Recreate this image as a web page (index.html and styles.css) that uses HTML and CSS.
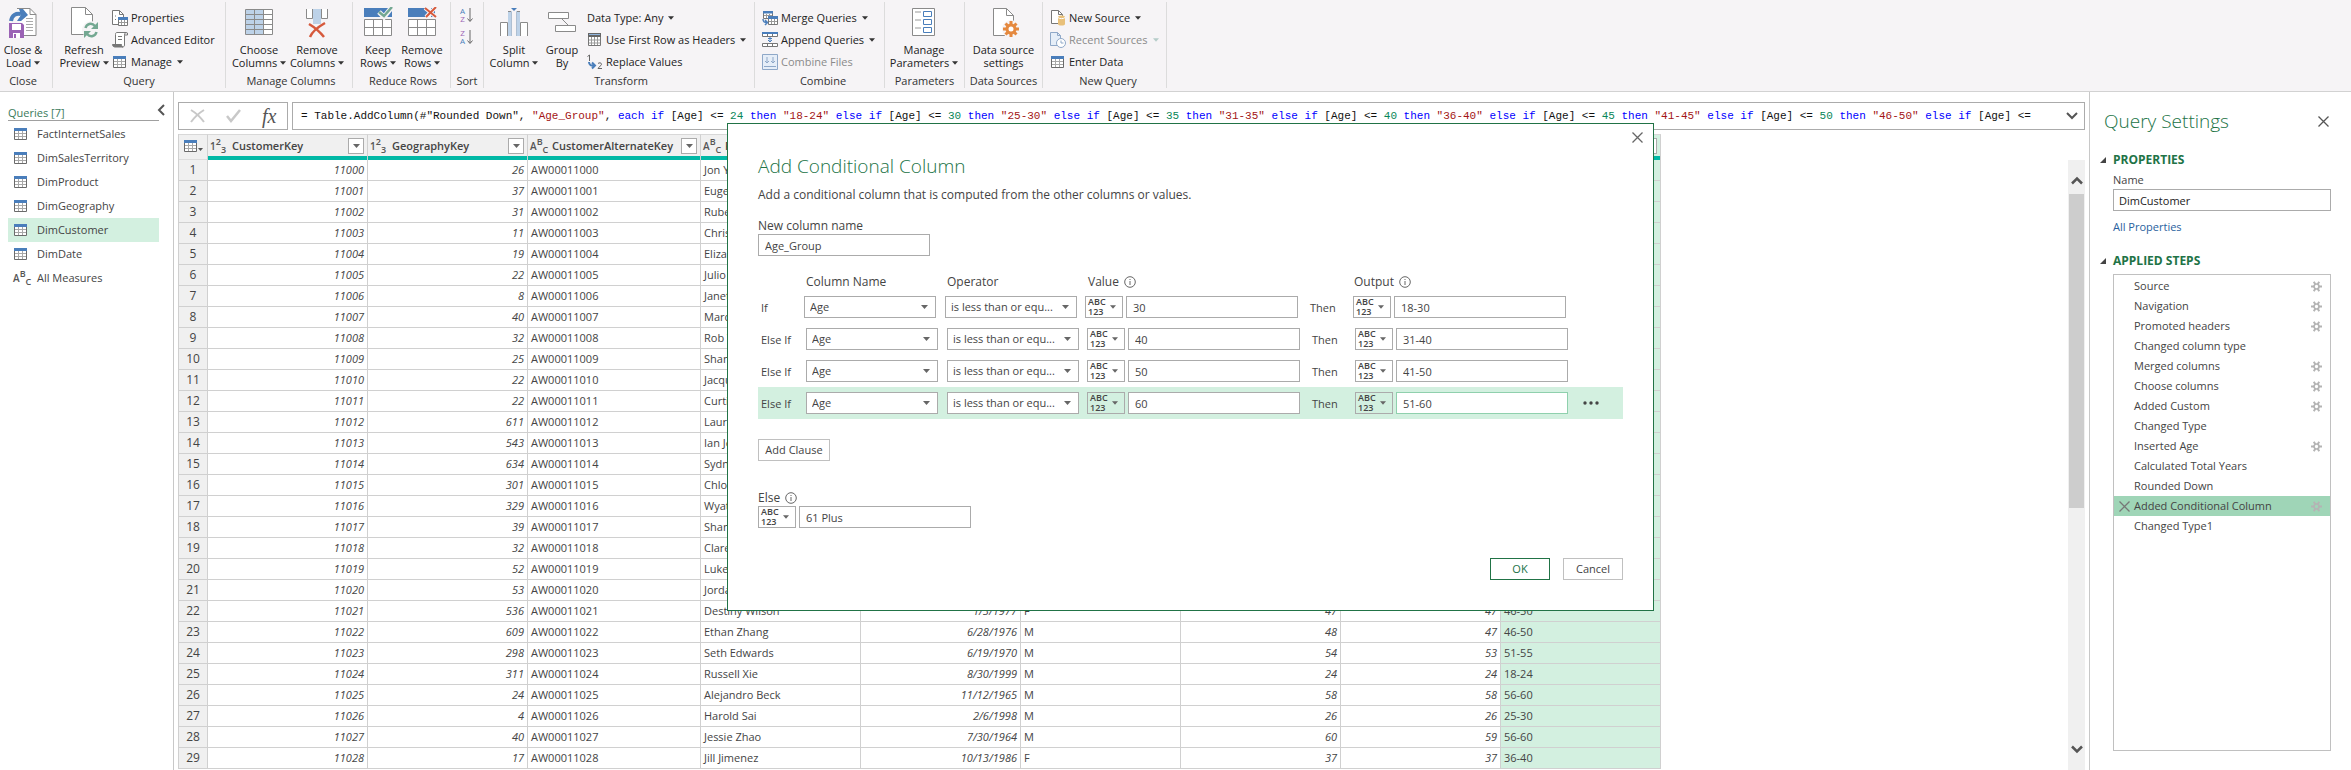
FILE: index.html
```html
<!DOCTYPE html>
<html lang="en">
<head>
<meta charset="utf-8">
<title>Power Query Editor</title>
<link rel="stylesheet" href="styles.css">
</head>
<body>
<svg class="defs" aria-hidden="true">
  <symbol id="caret" viewBox="0 0 7 4"><path d="M0 0h7L3.500 4z" fill="currentColor"/></symbol>
  <symbol id="grid" viewBox="0 0 13 12"><path d="M.5 1.500h12v10h-12z" fill="#fff" stroke="#6a6a6a"/><path d="M0 0h13v3H0z" fill="#4a7ebb"/><path d="M1 5.500h11M1 8.500h11M4.500 3v8M8.500 3v8" stroke="#a8a8a8" fill="none"/></symbol>
  <symbol id="cross" viewBox="0 0 11 11"><path d="M.5 .5l10 10M10.500 .5l-10 10" stroke="currentColor" stroke-width="1.300" fill="none"/></symbol>
  <symbol id="gear" viewBox="0 0 11 11"><path d="M0 5.500h3M8 5.500h3M2.800 .8l1.500 2.500M8.200 .8L6.700 3.300M2.800 10.200l1.500-2.500M8.200 10.200L6.700 7.700" stroke="#b4b4b4" stroke-width="2" fill="none"/><circle cx="5.500" cy="5.500" r="2.500" fill="none" stroke="#b4b4b4" stroke-width="1.700"/></symbol>
  <symbol id="info" viewBox="0 0 12 12"><circle cx="6" cy="6" r="5.300" fill="none" stroke="#666"/><path d="M6 5v4M6 3v1" stroke="#666" fill="none"/></symbol>
  <symbol id="tri" viewBox="0 0 6 6"><path d="M6 0v6H0z" fill="#444"/></symbol>
</svg>

<header class="ribbon">
  <section class="group g-close">
    <div class="tools">
      <button class="big"><svg class="pic" viewBox="0 0 30 32"><path d="M9 1.500h13l6 6v21H16" fill="#fff" stroke="#8a8a8a"/><path d="M22 1.500v6h6" fill="none" stroke="#8a8a8a"/><path d="M18 11.500h7M18 14.500h7M18 17.500h7M18 20.500h7M18 23.500h7" stroke="#aaa"/><path d="M3 14C4 8 8 6 13 7" fill="none" stroke="#4a7ebb" stroke-width="4"/><path d="M11 2h4l5 6-7 6h-4l4-6z" fill="#4a7ebb"/><path d="M1 16h13l2 2v13H1z" fill="#9b63b5"/><path d="M4 17h9v6H4z" fill="#fff"/><path d="M5 26h7v5H5z" fill="#fff"/><path d="M6 27h2v4H6z" fill="#9b63b5"/></svg><span>Close &amp;<br>Load <svg class="caret"><use href="#caret"/></svg></span></button>
    </div>
    <h2>Close</h2>
  </section>
  <section class="group g-query">
    <div class="tools">
      <button class="big"><svg class="pic" viewBox="0 0 30 32"><path d="M2.500 .5h14l7 7v20h-21z" fill="#fff" stroke="#8a8a8a"/><path d="M16.500 .5v7h7" fill="none" stroke="#8a8a8a"/><circle cx="22" cy="23" r="9" fill="#f6f4f6"/><path d="M16.500 21c1-4 6-6 9.500-2M27.500 25c-1 4-6 6-9.500 2" fill="none" stroke="#74a892" stroke-width="2.500"/><path d="M29 15v7h-7zM15 31v-7h7z" fill="#74a892"/></svg><span>Refresh<br>Preview <svg class="caret"><use href="#caret"/></svg></span></button>
      <div class="stack">
        <button class="small"><svg class="ico" viewBox="0 0 16 16"><path d="M.5 .5h7l4 4v10H.5z" fill="#fff" stroke="#777"/><path d="M7.500 .5v4h4M3 6h1M3 9.500h1" stroke="#777" fill="none"/><path d="M6.500 8.500h9v7h-9z" fill="#fff" stroke="#777"/><path d="M6 7h10v3H6z" fill="#4a7ebb"/><path d="M7 12.500h8M9.500 10v5M12.500 10v5" stroke="#999"/></svg>Properties</button>
        <button class="small"><svg class="ico" viewBox="0 0 16 16"><path d="M3.500 12V2.500C3.500 1 4 .5 5 .5h9c-1 .5-1.500 1-1.500 3V13c0 1.500-1 2-2 2" fill="#fff" stroke="#777"/><path d="M.5 12.500h9c0 1.500.5 2.500 1.500 2.500H3C1.500 15 .5 14 .5 12.500z" fill="#777" stroke="#777"/><path d="M12 3h3.500V1L14 .5M6 4.500h4M6 7.500h4" stroke="#777" fill="none"/></svg>Advanced Editor</button>
        <button class="small"><svg class="ico" viewBox="0 0 16 14"><use href="#grid" x="1" y="1" width="13" height="12"/></svg>Manage <svg class="caret"><use href="#caret"/></svg></button>
      </div>
    </div>
    <h2>Query</h2>
  </section>
  <section class="group g-cols">
    <div class="tools">
      <button class="big"><svg class="pic" viewBox="0 0 30 32"><path d="M1.500 2.500h27v25h-27z" fill="#fff"/><path d="M1.500 2.500h18v25h-18z" fill="#bdd2e8"/><path d="M1.500 2.500h27v25h-27zM10.500 2v26M19.500 2v26M1 7.500h28M1 12.500h28M1 17.500h28M1 22.500h28" fill="none" stroke="#8a8a8a"/></svg><span>Choose<br>Columns <svg class="caret"><use href="#caret"/></svg></span></button>
      <button class="big"><svg class="pic" viewBox="0 0 30 32"><path d="M4.500 2v9.500h6V2M25.500 2v9.500h-6V2" fill="#fff" stroke="#8a8a8a"/><path d="M11 2h8v15h-8z" fill="#bdd2e8"/><path d="M7 17c5 3 11 8 15 13M23 16C16 20 10 25 8 30" fill="none" stroke="#d6593c" stroke-width="2.500"/></svg><span>Remove<br>Columns <svg class="caret"><use href="#caret"/></svg></span></button>
    </div>
    <h2>Manage Columns</h2>
  </section>
  <section class="group g-rows">
    <div class="tools">
      <button class="big"><svg class="pic" viewBox="0 0 30 32"><path d="M1 1h28v9H1z" fill="#4a7ebb"/><path d="M1.500 12.500h27v16h-27zM10.500 12v16M19.500 12v16M1 20.500h28" fill="#fff" stroke="#8a8a8a"/><path d="M16 5l5 5 8-10" fill="none" stroke="#f6f4f6" stroke-width="5"/><path d="M16 5l5 4 8-9" fill="none" stroke="#74a892" stroke-width="2.500"/></svg><span>Keep<br>Rows <svg class="caret"><use href="#caret"/></svg></span></button>
      <button class="big"><svg class="pic" viewBox="0 0 30 32"><path d="M1 1h17l3 4-3 5H1z" fill="#4a7ebb"/><path d="M24 1h4v9h-4z" fill="#4a7ebb"/><path d="M1.500 12.500h27v16h-27zM10.500 12v16M19.500 12v16M1 20.500h28" fill="#fff" stroke="#8a8a8a"/><path d="M18 1l11 9M29 0L19 10" fill="none" stroke="#f6f4f6" stroke-width="4"/><path d="M18 1l11 9M29 0L19 10" fill="none" stroke="#d6593c" stroke-width="2"/></svg><span>Remove<br>Rows <svg class="caret"><use href="#caret"/></svg></span></button>
    </div>
    <h2>Reduce Rows</h2>
  </section>
  <section class="group g-sort">
    <div class="tools sorts">
      <button class="sort" aria-label="Sort ascending"><span><b class="a">A</b><b class="z">Z</b></span><svg viewBox="0 0 6 16"><path d="M3 1v13M.5 11.500l2.500 3 2.500-3" fill="none" stroke="#666"/></svg></button>
      <button class="sort" aria-label="Sort descending"><span><b class="z">Z</b><b class="a">A</b></span><svg viewBox="0 0 6 16"><path d="M3 1v13M.5 11.500l2.500 3 2.500-3" fill="none" stroke="#666"/></svg></button>
    </div>
    <h2>Sort</h2>
  </section>
  <section class="group g-trans">
    <div class="tools">
      <button class="big"><svg class="pic" viewBox="0 0 30 32"><path d="M1.500 29V15.500h7V29M28.500 29V15.500h-7V29" fill="#fff" stroke="#8a8a8a"/><path d="M9 4h4v25H9zM17 4h4v25h-4z" fill="#bdd2e8"/><path d="M9 4.500h3M18 4.500h3" stroke="#8a8a8a"/><path d="M12.500 5v24M17.500 5v24" stroke="#aebfd2"/><path d="M12 1h6l-3 3z" fill="#4a7ebb"/></svg><span>Split<br>Column <svg class="caret"><use href="#caret"/></svg></span></button>
      <button class="big"><svg class="pic" viewBox="0 0 30 32"><path d="M1.500 5.500h20v6h-20zM8.500 18.500h20v6h-20zM15 12l6 6" fill="#fff" stroke="#8a8a8a"/></svg><span>Group<br>By</span></button>
      <div class="stack">
        <button class="small">Data Type: Any <svg class="caret"><use href="#caret"/></svg></button>
        <button class="small"><svg class="ico" viewBox="0 0 16 14"><path d="M1.500 .5h12v12h-12z" fill="#fff" stroke="#777"/><path d="M1 0h13v4H1z" fill="#666"/><path d="M2 1.500h11" stroke="#8fb4dd"/><path d="M2 7h11M2 10h11M4.500 4v8M7.500 4v8M10.500 4v8" stroke="#999"/></svg>Use First Row as Headers <svg class="caret"><use href="#caret"/></svg></button>
        <button class="small"><svg class="ico" viewBox="0 0 16 16"><path d="M.5 2.500L2.500 1v6M11 9.500c1-1 3.500-1 3.500.8 0 1.500-3 2.500-3.500 4.200h4" fill="none" stroke="#666"/><path d="M2 8c0 3 2 4 6 3.500M5 8.500l3 3-3 3" fill="none" stroke="#4a7ebb" stroke-width="2"/></svg>Replace Values</button>
      </div>
    </div>
    <h2>Transform</h2>
  </section>
  <section class="group g-comb">
    <div class="tools">
      <div class="stack">
        <button class="small"><svg class="ico" viewBox="0 0 16 16"><path d="M1.500 2.500h9v6h-9z" fill="#fff" stroke="#777"/><path d="M1 1h10v2.500H1z" fill="#4a7ebb"/><path d="M2 5.500h8M4.500 4v4M7.500 4v4" stroke="#999"/><path d="M6.500 7.500h9v7h-9z" fill="#fff" stroke="#777"/><path d="M6 6h10v3H6z" fill="#4a7ebb"/><path d="M7 11.500h8M9.500 9v5M12.500 9v5" stroke="#999"/><path d="M1 9c0 3 1 3.500 4 3.500M3 10l2.500 2.500L3 15" fill="none" stroke="#4a7ebb" stroke-width="1.500"/></svg>Merge Queries <svg class="caret"><use href="#caret"/></svg></button>
        <button class="small"><svg class="ico" viewBox="0 0 16 16"><path d="M.5 1.500h15v3H.5zM.5 11.500h15v3H.5zM5.500 2v2M10.500 2v2M5.500 12v2M10.500 12v2" fill="#fff" stroke="#777"/><path d="M0 0h16v2H0z" fill="#4a7ebb"/><path d="M8 5v5M6 8l2 2 2-2M6 6.500h4" fill="none" stroke="#4a7ebb"/></svg>Append Queries <svg class="caret"><use href="#caret"/></svg></button>
        <button class="small" disabled><svg class="ico" viewBox="0 0 16 16"><path d="M.5 .5h15v15H.5z" fill="#e6eef8" stroke="#8fa8c8"/><path d="M5 3v6M3 7l2 2 2-2M11 3v6M9 7l2 2 2-2M2 12.500h12" fill="none" stroke="#8fa8c8"/></svg>Combine Files</button>
      </div>
    </div>
    <h2>Combine</h2>
  </section>
  <section class="group g-param">
    <div class="tools">
      <button class="big"><svg class="pic" viewBox="0 0 30 32"><path d="M3.500 1.500h22v27h-22z" fill="#fff" stroke="#8a8a8a"/><path d="M6 5h6M6 13h6M6 21h6" stroke="#999"/><path d="M14.500 4.500h8v5h-8zM14.500 12.500h8v5h-8zM14.500 20.500h8v5h-8z" fill="#fff" stroke="#4a7ebb"/></svg><span>Manage<br>Parameters <svg class="caret"><use href="#caret"/></svg></span></button>
    </div>
    <h2>Parameters</h2>
  </section>
  <section class="group g-data">
    <div class="tools">
      <button class="big"><svg class="pic" viewBox="0 0 30 32"><path d="M4.500 1.500h13l7 7v20h-20z" fill="#fff" stroke="#8a8a8a"/><path d="M17.500 1.500v7h7" fill="none" stroke="#8a8a8a"/><circle cx="22" cy="22" r="9" fill="#f6f4f6"/><path d="M22 14v16M14 22h16M16.500 16.500l11 11M27.500 16.500l-11 11" stroke="#e5893f" stroke-width="3"/><circle cx="22" cy="22" r="5.500" fill="#e5893f"/><circle cx="22" cy="22" r="2.500" fill="#fff"/></svg><span>Data source<br>settings</span></button>
    </div>
    <h2>Data Sources</h2>
  </section>
  <section class="group g-new">
    <div class="tools">
      <div class="stack">
        <button class="small"><svg class="ico" viewBox="0 0 16 16"><path d="M1.500 .5h7l4 4v9h-11z" fill="#fff" stroke="#777"/><path d="M8.500 .5v4h4" fill="none" stroke="#777"/><path d="M8 7c0-2 7-2 7 0v7c0 2-7 2-7 0z" fill="#e8c07a"/><path d="M8 7.500c1 1.500 6 1.500 7 0" stroke="#fff" fill="none"/></svg>New Source <svg class="caret"><use href="#caret"/></svg></button>
        <button class="small" disabled><svg class="ico" viewBox="0 0 16 16"><path d="M.5 .5h7l3 3v10H.5z" fill="#e6eef8" stroke="#8fa8c8"/><path d="M7.500 .5v3h3" fill="none" stroke="#8fa8c8"/><circle cx="11" cy="11" r="4.500" fill="#fff" stroke="#8fa8c8"/><path d="M11 8.500V11h2.500" fill="none" stroke="#8fa8c8"/></svg>Recent Sources <svg class="caret"><use href="#caret"/></svg></button>
        <button class="small"><svg class="ico" viewBox="0 0 16 14"><use href="#grid" x="1" y="1" width="13" height="12"/></svg>Enter Data</button>
      </div>
    </div>
    <h2>New Query</h2>
  </section>
</header>

<div class="work">
  <nav class="queries">
    <div class="qhead"><span>Queries [7]</span><button class="collapse" aria-label="Collapse"><svg viewBox="0 0 8 12"><path d="M7 1L2 6l5 5" fill="none" stroke="#555" stroke-width="2"/></svg></button></div>
    <a href="#"><svg><use href="#grid"/></svg>FactInternetSales</a>
    <a href="#"><svg><use href="#grid"/></svg>DimSalesTerritory</a>
    <a href="#"><svg><use href="#grid"/></svg>DimProduct</a>
    <a href="#"><svg><use href="#grid"/></svg>DimGeography</a>
    <a href="#" class="on"><svg><use href="#grid"/></svg>DimCustomer</a>
    <a href="#"><svg><use href="#grid"/></svg>DimDate</a>
    <a href="#" class="measures"><span class="type"><i>A</i><i>B</i><i>C</i></span>All Measures</a>
  </nav>

  <main class="center">
    <div class="formula">
      <div class="fbtns">
        <button aria-label="Cancel"><svg viewBox="0 0 15 14"><path d="M1 1c5 3 10 8 13 12M14 1C9 4 4 9 1 13" fill="none" stroke="#c8c8c8" stroke-width="2"/></svg></button>
        <button aria-label="Commit"><svg viewBox="0 0 15 14"><path d="M1 7l4 5L14 1" fill="none" stroke="#c8c8c8" stroke-width="2.500"/></svg></button>
        <button class="fx">fx</button>
      </div>
      <div class="fbox">
        <code>= Table.AddColumn(#"Rounded Down", <s>"Age_Group"</s>, <b>each</b> <b>if</b> [Age] &lt;= <i>24</i> <b>then</b> <s>"18-24"</s> <b>else</b> <b>if</b> [Age] &lt;= <i>30</i> <b>then</b> <s>"25-30"</s> <b>else</b> <b>if</b> [Age] &lt;= <i>35</i> <b>then</b> <s>"31-35"</s> <b>else</b> <b>if</b> [Age] &lt;= <i>40</i> <b>then</b> <s>"36-40"</s> <b>else</b> <b>if</b> [Age] &lt;= <i>45</i> <b>then</b> <s>"41-45"</s> <b>else</b> <b>if</b> [Age] &lt;= <i>50</i> <b>then</b> <s>"46-50"</s> <b>else</b> <b>if</b> [Age] &lt;=</code>
        <button class="expand" aria-label="Expand"><svg viewBox="0 0 12 8"><path d="M1 1l5 5 5-5" fill="none" stroke="#555" stroke-width="2"/></svg></button>
      </div>
    </div>
    <div class="gridarea">
      <table class="data">
        <colgroup><col class="c-no"><col><col><col class="c-alt"><col><col><col><col><col><col></colgroup>
        <thead>
          <tr>
            <th class="corner"><div class="head"><svg class="tbl"><use href="#grid"/></svg><svg class="mini"><use href="#caret"/></svg></div></th>
            <th><div class="head"><span class="type"><i>1</i><i>2</i><i>3</i></span>CustomerKey<button aria-label="Filter"><svg><use href="#caret"/></svg></button></div><div class="bar"></div></th>
            <th><div class="head"><span class="type"><i>1</i><i>2</i><i>3</i></span>GeographyKey<button aria-label="Filter"><svg><use href="#caret"/></svg></button></div><div class="bar"></div></th>
            <th><div class="head"><span class="type"><i>A</i><i>B</i><i>C</i></span>CustomerAlternateKey<button aria-label="Filter"><svg><use href="#caret"/></svg></button></div><div class="bar"></div></th>
            <th><div class="head"><span class="type"><i>A</i><i>B</i><i>C</i></span>Full Name</div><div class="bar"></div></th>
            <th><div class="head"></div><div class="bar"></div></th>
            <th><div class="head"></div><div class="bar"></div></th>
            <th><div class="head"></div><div class="bar"></div></th>
            <th><div class="head"></div><div class="bar"></div></th>
            <th class="sel"><div class="head"><button aria-label="Filter"><svg><use href="#caret"/></svg></button></div><div class="bar"></div></th>
          </tr>
        </thead>
        <tbody id="rows"></tbody>
      </table>
      <div class="scroll">
        <svg viewBox="0 0 12 9"><path d="M1 7.500l5-5 5 5" fill="none" stroke="#555" stroke-width="2.500"/></svg>
        <div class="track"><div class="thumb"></div></div>
        <svg viewBox="0 0 12 9"><path d="M1 1.500l5 5 5-5" fill="none" stroke="#555" stroke-width="2.500"/></svg>
      </div>
    </div>
  </main>

  <aside class="settings">
    <div class="shead"><h1>Query Settings</h1><button class="x" aria-label="Close"><svg><use href="#cross"/></svg></button></div>
    <h3 class="first"><svg><use href="#tri"/></svg>PROPERTIES</h3>
    <label for="qname">Name</label>
    <input id="qname" type="text" value="DimCustomer">
    <a href="#" class="all">All Properties</a>
    <h3><svg><use href="#tri"/></svg>APPLIED STEPS</h3>
    <ul class="steps">
      <li>Source<svg class="gear"><use href="#gear"/></svg></li>
      <li>Navigation<svg class="gear"><use href="#gear"/></svg></li>
      <li>Promoted headers<svg class="gear"><use href="#gear"/></svg></li>
      <li>Changed column type</li>
      <li>Merged columns<svg class="gear"><use href="#gear"/></svg></li>
      <li>Choose columns<svg class="gear"><use href="#gear"/></svg></li>
      <li>Added Custom<svg class="gear"><use href="#gear"/></svg></li>
      <li>Changed Type</li>
      <li>Inserted Age<svg class="gear"><use href="#gear"/></svg></li>
      <li>Calculated Total Years</li>
      <li>Rounded Down</li>
      <li class="on"><svg class="del"><use href="#cross"/></svg>Added Conditional Column<svg class="gear"><use href="#gear"/></svg></li>
      <li>Changed Type1</li>
    </ul>
  </aside>
</div>

<div class="dialog" role="dialog" aria-labelledby="dtitle">
  <button class="dclose" aria-label="Close"><svg><use href="#cross"/></svg></button>
  <h1 id="dtitle">Add Conditional Column</h1>
  <p class="desc">Add a conditional column that is computed from the other columns or values.</p>
  <label for="newcol" class="lbl">New column name</label>
  <input id="newcol" class="field" type="text" value="Age_Group">
  <div class="clause heads">
    <span class="kw"></span><span class="pick">Column Name</span><span class="pick">Operator</span><span class="val">Value <svg class="info"><use href="#info"/></svg></span><span class="val">Output <svg class="info"><use href="#info"/></svg></span>
  </div>
  <div class="clause base">
    <span class="kw">If</span>
    <span class="pick"><select aria-label="Column"><option>Age</option></select><svg><use href="#caret"/></svg></span>
    <span class="pick op"><select aria-label="Operator"><option>is less than or equ...</option></select><svg><use href="#caret"/></svg></span>
    <button class="any"><span>ABC<br>123</span><svg><use href="#caret"/></svg></button><input class="field" aria-label="Value" type="text" value="30">
    <span class="then">Then</span>
    <button class="any"><span>ABC<br>123</span><svg><use href="#caret"/></svg></button><input class="field" aria-label="Output" type="text" value="18-30">
  </div>
  <div class="clause">
    <span class="kw">Else If</span>
    <span class="pick"><select aria-label="Column"><option>Age</option></select><svg><use href="#caret"/></svg></span>
    <span class="pick op"><select aria-label="Operator"><option>is less than or equ...</option></select><svg><use href="#caret"/></svg></span>
    <button class="any"><span>ABC<br>123</span><svg><use href="#caret"/></svg></button><input class="field" aria-label="Value" type="text" value="40">
    <span class="then">Then</span>
    <button class="any"><span>ABC<br>123</span><svg><use href="#caret"/></svg></button><input class="field" aria-label="Output" type="text" value="31-40">
  </div>
  <div class="clause">
    <span class="kw">Else If</span>
    <span class="pick"><select aria-label="Column"><option>Age</option></select><svg><use href="#caret"/></svg></span>
    <span class="pick op"><select aria-label="Operator"><option>is less than or equ...</option></select><svg><use href="#caret"/></svg></span>
    <button class="any"><span>ABC<br>123</span><svg><use href="#caret"/></svg></button><input class="field" aria-label="Value" type="text" value="50">
    <span class="then">Then</span>
    <button class="any"><span>ABC<br>123</span><svg><use href="#caret"/></svg></button><input class="field" aria-label="Output" type="text" value="41-50">
  </div>
  <div class="clause active">
    <span class="kw">Else If</span>
    <span class="pick"><select aria-label="Column"><option>Age</option></select><svg><use href="#caret"/></svg></span>
    <span class="pick op"><select aria-label="Operator"><option>is less than or equ...</option></select><svg><use href="#caret"/></svg></span>
    <button class="any"><span>ABC<br>123</span><svg><use href="#caret"/></svg></button><input class="field" aria-label="Value" type="text" value="60">
    <span class="then">Then</span>
    <button class="any"><span>ABC<br>123</span><svg><use href="#caret"/></svg></button><input class="field focus" aria-label="Output" type="text" value="51-60">
    <button class="more" aria-label="More"><svg viewBox="0 0 16 4"><circle cx="2" cy="2" r="1.700"/><circle cx="8" cy="2" r="1.700"/><circle cx="14" cy="2" r="1.700"/></svg></button>
  </div>
  <button class="btn add">Add Clause</button>
  <label for="elseval" class="lbl else">Else <svg class="info"><use href="#info"/></svg></label>
  <div class="elserow"><button class="any"><span>ABC<br>123</span><svg><use href="#caret"/></svg></button><input id="elseval" class="field" type="text" value="61 Plus"></div>
  <div class="actions"><button class="btn ok">OK</button><button class="btn">Cancel</button></div>
</div>
<script src="app.js"></script>
</body>
</html>
```

FILE: styles.css
```css
* { box-sizing: border-box; }
body {
  margin: 0;
  height: 100vh;
  display: flex;
  flex-direction: column;
  overflow: hidden;
  position: relative;
  background: #fff;
  color: #444;
  font: 12px/16px "Open Sans", "Noto Sans", sans-serif;
}
button, input, select {
  font: inherit;
  color: inherit;
  background: none;
  border: 0;
  padding: 0;
  margin: 0;
  border-radius: 0;
}
h1, h2, h3, p, ul { margin: 0; padding: 0; font-weight: 400; }
a { text-decoration: none; color: inherit; }
svg { flex: none; }
.defs { position: absolute; width: 0; height: 0; }

/* Ribbon */
.ribbon {
  display: flex;
  flex: none;
  height: 92px;
  padding: 2px 0;
  background: #f6f4f6;
  border-bottom: 1px solid #d2d2d2;
  color: #222;
  font-size: 11px;
}
.group {
  display: flex;
  flex-direction: column;
  flex: none;
  height: 86px;
  border-right: 1px solid #dcdcdc;
}
.group h2 { font-size: 11px; line-height: 14px; text-align: center; color: #333; white-space: nowrap; }
.tools { display: flex; height: 73px; padding-top: 5px; }
.big { display: flex; flex-direction: column; align-items: center; line-height: 13px; gap: 4px; height: 66px; white-space: nowrap; }
.pic { width: 30px; height: 32px; }
.caret { width: 6px; height: 4px; vertical-align: 2px; color: #333; }
.stack { display: flex; flex-direction: column; }
.small { display: flex; align-items: center; gap: 3px; height: 22px; white-space: nowrap; }
.small .caret { margin-left: 2px; }
.small:disabled { color: #8a8a8a; }
.small:disabled .caret { color: #b5ccc8; }
.ico { width: 16px; height: 16px; }
.g-close { width: 53px; padding-right: 6px; }
.g-close .big { width: 46px; }
.g-query { width: 173px; padding-left: 3px; }
.g-query .big { width: 56px; }
.g-query h2 { padding-right: 3px; }
.g-cols { width: 127px; padding-left: 4px; }
.g-cols .big { width: 58px; }
.g-rows { width: 98px; padding-left: 3px; }
.g-rows .big { width: 44px; }
.g-sort { width: 33px; }
.sorts { flex-direction: column; align-items: center; gap: 5px; }
.sort { display: flex; gap: 2px; width: 14px; height: 17px; font-size: 8px; line-height: 8px; }
.sort b { display: block; font-weight: 400; }
.sort .a { color: #4a7ebb; }
.sort .z { color: #9b63b5; }
.sort svg { width: 6px; height: 16px; }
.g-trans { width: 271px; padding-left: 4px; }
.g-trans .big { width: 52px; }
.g-trans .big + .big { width: 44px; margin-right: 3px; }
.g-comb { width: 130px; padding-left: 7px; }
.g-param { width: 80px; }
.g-param .big, .g-data .big { width: 78px; }
.g-data { width: 78px; }
.g-new { width: 124px; padding-left: 7px; }

/* Body */
.work { display: flex; flex: 1; min-height: 0; }
.queries { width: 174px; flex: none; border-right: 1px solid #c8c8c8; padding: 12px 14px 0 8px; }
.qhead { display: flex; justify-content: space-between; height: 17px; border-bottom: 1px solid #a0a0a0; margin-bottom: 1px; color: #3b7a5b; font-size: 11px; line-height: 18px; }
.collapse { width: 8px; height: 12px; margin-right: -6px; }
.collapse svg { display: block; width: 8px; height: 12px; }
.queries a { display: flex; align-items: center; gap: 10px; height: 24px; padding-left: 6px; font-size: 11px; }
.queries a svg { width: 13px; height: 12px; }
.queries a.measures { gap: 2px; padding-left: 5px; }
.queries a.on { background: #d3f0e0; }

.center { flex: 1; min-width: 0; display: flex; flex-direction: column; gap: 4px; padding: 10px 4px 0; }
.formula { display: flex; gap: 4px; height: 28px; flex: none; }
.fbtns { display: flex; align-items: center; justify-content: space-around; width: 110px; border: 1px solid #ababab; }
.fbtns svg { display: block; width: 15px; height: 14px; }
.fx { font: italic 20px/20px "Liberation Serif", serif; color: #555; }
.fbox { display: flex; align-items: center; flex: 1; min-width: 0; border: 1px solid #ababab; padding: 0 6px 0 8px; justify-content: space-between; }
code { font: 11px/16px "Liberation Mono", monospace; color: #111; white-space: pre; }
code b { font-weight: 400; color: #00f; }
code s { text-decoration: none; color: #a31515; }
code i { font-style: normal; color: #098658; }
.expand { width: 12px; height: 8px; }
.expand svg { display: block; width: 12px; height: 8px; }

.gridarea { display: flex; flex: 1; min-height: 0; justify-content: space-between; }
.data { table-layout: fixed; width: 1483px; border-collapse: separate; border-spacing: 0; font-size: 11px; height: max-content; border-left: 1px solid #d0d0d0; }
.data col { width: 160px; }
.data col.c-no { width: 29px; }
.data col.c-alt { width: 173px; }
.data th { padding: 0; height: 26px; background: #f0f0f0; border-top: 1px solid #d8d8d8; border-right: 1px solid #d0d0d0; font-weight: 600; text-align: left; vertical-align: top; }
.data .sel { background: #d3f0e0; }
.head { display: flex; align-items: center; height: 21px; padding: 0 3px 0 2px; overflow: hidden; white-space: nowrap; }
.head button { display: flex; align-items: center; justify-content: center; width: 16px; height: 16px; margin-left: auto; background: #fff; border: 1px solid #ababab; }
.head button svg { width: 7px; height: 4px; color: #666; }
.type { display: flex; align-items: flex-start; flex: none; width: 22px; height: 18px; font-size: 9px; line-height: 10px; font-weight: 600; color: #555; }
.type i { font-style: normal; }
.type i:first-child { align-self: center; font-size: 10px; }
.type i:last-child { align-self: flex-end; }
.bar { height: 4px; background: #00b8a5; }
.corner .head { padding-left: 5px; }
.tbl { width: 13px; height: 12px; }
.mini { width: 5px; height: 3px; margin: 8px 0 0 1px; color: #555; }
.data th.corner { border-bottom: 1px solid #dcdcdc; }
.data td { height: 21px; padding: 0 3px; line-height: 20px; border-right: 1px solid #d0d0d0; border-bottom: 1px solid #d0d0d0; white-space: nowrap; overflow: hidden; }
.data td.no { background: #f0f0f0; text-align: center; font-size: 12px; padding: 0; }
.data td.r { text-align: right; font-style: italic; }

.scroll { display: flex; flex-direction: column; align-items: center; width: 17px; margin-top: 26px; padding: 16px 0; background: #f0f0f0; }
.scroll svg { width: 12px; height: 9px; }
.track { flex: 1; width: 15px; padding: 9px 0; }
.thumb { height: 58%; background: #cdcdcd; }

.settings { width: 262px; flex: none; display: flex; flex-direction: column; border-left: 1px solid #c8c8c8; padding: 14px 20px 19px 23px; font-size: 11px; }
.shead { display: flex; justify-content: space-between; align-items: center; height: 30px; margin: 0 2px 0 -9px; }
.settings h1, .dialog h1 { font-size: 19px; line-height: 30px; font-weight: 300; color: #217346; }
.x, .x svg { display: block; width: 11px; height: 11px; color: #555; }
.settings h3 { display: flex; align-items: center; gap: 7px; margin: 18px 0 5px -13px; line-height: 16px; font-size: 12px; font-weight: 700; color: #217346; }
.settings h3.first { margin: 16px 0 4px -13px; }
.settings h3 svg { width: 6px; height: 6px; }
.settings label { line-height: 16px; margin-bottom: 1px; }
.settings input { width: 100%; height: 22px; border: 1px solid #ababab; padding: 0 5px; color: #222; }
.all { color: #2a5f9e; line-height: 16px; margin-top: 8px; }
.steps { flex: 1; border: 1px solid #c0c0c0; padding-top: 1px; list-style: none; }
.steps li { display: flex; align-items: center; height: 20px; padding: 0 8px 0 20px; white-space: nowrap; }
.steps .gear { width: 11px; height: 11px; margin-left: auto; }
.steps li.on { background: #9fd5b7; padding-left: 5px; gap: 4px; }
.steps .del { width: 11px; height: 11px; color: #777; }

/* Dialog */
.dialog {
  position: absolute;
  left: 727px;
  top: 123px;
  width: 927px;
  height: 488px;
  padding: 27px 30px 0;
  background: #fff;
  border: 1px solid #217346;
}
.dclose { position: absolute; top: 8px; right: 10px; width: 11px; height: 11px; color: #666; }
.dclose svg { display: block; width: 11px; height: 11px; }
.desc { line-height: 20px; margin-top: 4px; }
.lbl { display: flex; align-items: center; gap: 5px; line-height: 17px; margin-top: 12px; }
.field { width: 172px; height: 22px; border: 1px solid #ababab; padding: 0 6px; background: #fff; font-size: 11px; }
.dialog > .field { display: block; }
.clause { display: flex; align-items: center; height: 32px; width: 865px; }
.clause.heads { height: 18px; margin-top: 17px; }
.kw { width: 48px; padding: 2px 0 0 3px; flex: none; font-size: 11px; }
.base .kw { width: 46px; }
.pick { position: relative; width: 132px; margin-right: 9px; flex: none; }
.pick.op { margin-right: 8px; }
.pick select { display: block; appearance: none; width: 100%; height: 22px; border: 1px solid #ababab; padding: 0 5px; background: #fff; font-size: 11px; }
.pick svg { position: absolute; right: 8px; top: 9px; width: 7px; height: 4px; color: #666; pointer-events: none; }
.val { display: flex; align-items: center; gap: 5px; width: 266px; flex: none; }
.info { width: 12px; height: 12px; }
.any { display: flex; align-items: center; justify-content: space-between; width: 38px; height: 22px; padding: 0 6px 0 2px; border: 1px solid #ababab; margin-right: 3px; flex: none; font-size: 9px; line-height: 10px; font-weight: 600; text-align: left; }
.any svg { width: 6px; height: 4px; color: #666; }
.then { width: 55px; padding: 2px 0 0 12px; flex: none; font-size: 11px; }
.active { background: #d3f0e0; }
.focus { border-color: #8fd0ad; }
.more { margin-left: 15px; width: 16px; height: 4px; }
.more svg { display: block; width: 16px; height: 4px; fill: #444; }
.btn { height: 22px; border: 1px solid #c0c0c0; width: 60px; font-size: 11px; }
.add { display: block; width: 72px; margin-top: 20px; }
.lbl.else { margin-top: 28px; }
.elserow { display: flex; }
.actions { display: flex; justify-content: flex-end; gap: 13px; margin-top: 30px; }
.ok { border-color: #217346; color: #217346; }
```

FILE: app.js
```js
const people = [
  [26, "Jon Yang"], [37, "Eugene Huang"], [31, "Ruben Torres"], [11, "Christy Zhu"],
  [19, "Elizabeth Johnson"], [22, "Julio Ruiz"], [8, "Janet Alvarez"], [40, "Marco Mehta"],
  [32, "Rob Verhoff"], [25, "Shannon Carlson"], [22, "Jacquelyn Suarez"], [22, "Curtis Lu"],
  [611, "Lauren Walker"], [543, "Ian Jenkins"], [634, "Sydney Bennett"], [301, "Chloe Young"],
  [329, "Wyatt Hill"], [39, "Shannon Wang"], [32, "Clarence Rai"], [52, "Luke Lal"],
  [53, "Jordan King"],
  [536, "Destiny Wilson", "1/3/1977", "F", 47, 47, "46-50"],
  [609, "Ethan Zhang", "6/28/1976", "M", 48, 47, "46-50"],
  [298, "Seth Edwards", "6/19/1970", "M", 54, 53, "51-55"],
  [311, "Russell Xie", "8/30/1999", "M", 24, 24, "18-24"],
  [24, "Alejandro Beck", "11/12/1965", "M", 58, 58, "56-60"],
  [4, "Harold Sai", "2/6/1998", "M", 26, 26, "25-30"],
  [40, "Jessie Zhao", "7/30/1964", "M", 60, 59, "56-60"],
  [17, "Jill Jimenez", "10/13/1986", "F", 37, 37, "36-40"]
];

const classes = ["no", "r", "r", "", "", "r", "", "r", "r", "sel"];
const body = document.getElementById("rows");

people.forEach(([geo, name, birth = "", sex = "", years = "", rounded = "", group = ""], i) => {
  const key = 11000 + i;
  const row = body.insertRow();
  [i + 1, key, geo, "AW000" + key, name, birth, sex, years, rounded, group].forEach((value, c) => {
    const cell = row.insertCell();
    cell.className = classes[c];
    cell.textContent = value;
  });
});
```
